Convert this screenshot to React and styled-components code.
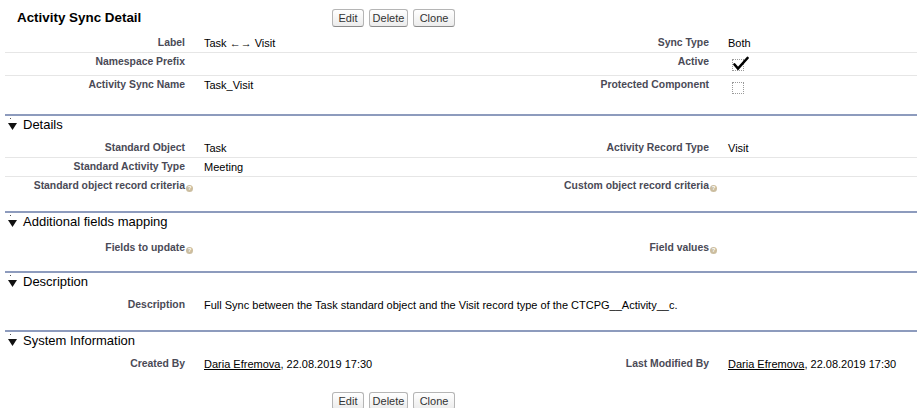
import styled, { createGlobalStyle } from "styled-components";

const GlobalStyle = createGlobalStyle`
    body {
        margin: 0;
        background: #fff;
        font-family: "Liberation Sans", Arial, sans-serif;
    }
`;

// one row of the two-column detail list
const Field = ({ label, value, rightLabel, rightValue, help, rightHelp, tall, last }) => (
    <Row $last={last} $tall={tall}>
        <LabelCell $help={help}>
            {label}
            {help && <HelpOrb>?</HelpOrb>}
        </LabelCell>
        <DataCell>{value}</DataCell>
        <LabelCell $help={rightHelp}>
            {rightLabel}
            {rightHelp && <HelpOrb>?</HelpOrb>}
        </LabelCell>
        <DataCell>{rightValue}</DataCell>
    </Row>
);

const Section = ({ title, gap = 16, children }) => (
    <SectionBox $gap={gap}>
        <SectionHeader>
            <Twistie>
                <svg width="9" height="7" viewBox="0 0 9 7">
                    <polygon points="0,0 9,0 4.5,7" fill="#111" />
                </svg>
            </Twistie>
            {title}
        </SectionHeader>
        {children}
    </SectionBox>
);

const Checkbox = ({ checked }) => (
    <CheckBoxBox>
        {checked && (
            <CheckMark width="16" height="15" viewBox="0 0 16 15">
                <path d="M1.5 8.5 L5 12.5 L14.5 2" stroke="#000" strokeWidth="2.6" fill="none" strokeLinecap="round" />
            </CheckMark>
        )}
    </CheckBoxBox>
);

const Buttons = () => (
    <ButtonGroup>
        <Button $w={32}>Edit</Button>
        <Button $w={39}>Delete</Button>
        <Button $w={42}>Clone</Button>
    </ButtonGroup>
);

const Owner = () => (
    <>
        <UserLink href="#">Daria Efremova</UserLink>, 22.08.2019 17:30
    </>
);

const App = () => {
    return (
        <>
            <GlobalStyle />
            <Page>
                <TitleBar>
                    <Title>Activity Sync Detail</Title>
                    <Buttons />
                </TitleBar>

                <Field label="Label" value="Task ←→ Visit" rightLabel="Sync Type" rightValue="Both" />
                <Field label="Namespace Prefix" rightLabel="Active" rightValue={<Checkbox checked />} />
                <Field label="Activity Sync Name" value="Task_Visit" rightLabel="Protected Component" rightValue={<Checkbox />} last />

                <Section title="Details">
                    <Field label="Standard Object" value="Task" rightLabel="Activity Record Type" rightValue="Visit" />
                    <Field label="Standard Activity Type" value="Meeting" />
                    <Field label="Standard object record criteria" help rightLabel="Custom object record criteria" rightHelp last />
                </Section>

                <Section title="Additional fields mapping">
                    <Field label="Fields to update" help rightLabel="Field values" rightHelp tall last />
                </Section>

                <Section title="Description" gap={14}>
                    <Row $last>
                        <LabelCell>Description</LabelCell>
                        <WideCell>
                            Full Sync between the Task standard object and the Visit record type of the CTCPG__Activity__c.
                        </WideCell>
                    </Row>
                </Section>

                <Section title="System Information">
                    <Field label="Created By" value={<Owner />} rightLabel="Last Modified By" rightValue={<Owner />} last />
                </Section>

                <BottomBar>
                    <Buttons />
                </BottomBar>
            </Page>
        </>
    );
};

export default App;

// Styled Components
const Page = styled.div`
    padding-left: 5px;
    color: #000;
`;

const TitleBar = styled.div`
    display: flex;
    height: 34px;
`;

const Title = styled.h2`
    margin: 0;
    width: 315px;
    padding: 10px 0 0 12px;
    font-size: 13.4px;
    line-height: 16px;
    font-weight: bold;
    color: #000;
`;

const ButtonGroup = styled.div`
    display: flex;
    gap: 5px;
    padding-top: 9px;
`;

const Button = styled.button`
    box-sizing: border-box;
    width: ${(p) => p.$w}px;
    height: 18px;
    padding: 0;
    font-family: "Liberation Sans", Arial, sans-serif;
    font-size: 11px;
    color: #333;
    background: linear-gradient(#ffffff, #ececec);
    border: 1px solid #b5b5b5;
    border-bottom-color: #8a8a8a;
    border-radius: 3px;
    cursor: pointer;
`;

const BottomBar = styled.div`
    display: flex;
    padding: 10px 0 0 327px;
`;

const Row = styled.div`
    display: grid;
    grid-template-columns: 190px 340px 184px 1fr;
    align-items: start;
    padding-top: ${(p) => (p.$tall ? "3px" : "0")};
    border-bottom: ${(p) => (p.$last ? "none" : "1px solid #e6e6e6")};
`;

const LabelCell = styled.div`
    padding: 2px ${(p) => (p.$help ? "2px" : "10px")} 2px 0;
    text-align: right;
    font-size: 10.4px;
    line-height: 14px;
    font-weight: bold;
    color: #4a4a56;
    white-space: nowrap;
`;

const DataCell = styled.div`
    padding: 2px 0 2px 9px;
    font-size: 11px;
    line-height: 14px;
    color: #000;
`;

const WideCell = styled(DataCell)`
    grid-column: 2 / 5;
`;

const HelpOrb = styled.span`
    display: inline-block;
    width: 7px;
    height: 7px;
    margin-left: 1px;
    border-radius: 50%;
    background: #cbbd9f;
    color: #fff;
    font-size: 6px;
    line-height: 7px;
    text-align: center;
    vertical-align: -1px;
`;

const SectionBox = styled.div`
    margin-top: ${(p) => p.$gap}px;
    border-top: 2px solid #8d9bbd;
`;

const SectionHeader = styled.h3`
    display: flex;
    align-items: center;
    margin: 0;
    padding: 1px 0 6px 3px;
    font-size: 13px;
    line-height: 16px;
    font-weight: normal;
    color: #000;
`;

const Twistie = styled.span`
    position: relative;
    display: inline-flex;
    width: 9px;
    height: 7px;
    margin: 2px 6px 0 0;
    &::before {
        content: "";
        position: absolute;
        left: 2px;
        top: -5px;
        width: 1px;
        height: 1px;
        background: #555;
    }
`;

const CheckBoxBox = styled.span`
    position: relative;
    display: block;
    box-sizing: border-box;
    width: 12px;
    height: 12px;
    margin: 4px 0 2px 4px;
    border: 1px dotted #9a9a9a;
`;

const CheckMark = styled.svg`
    position: absolute;
    left: 0;
    top: -4px;
`;

const UserLink = styled.a`
    color: #000;
    text-decoration: underline;
`;
